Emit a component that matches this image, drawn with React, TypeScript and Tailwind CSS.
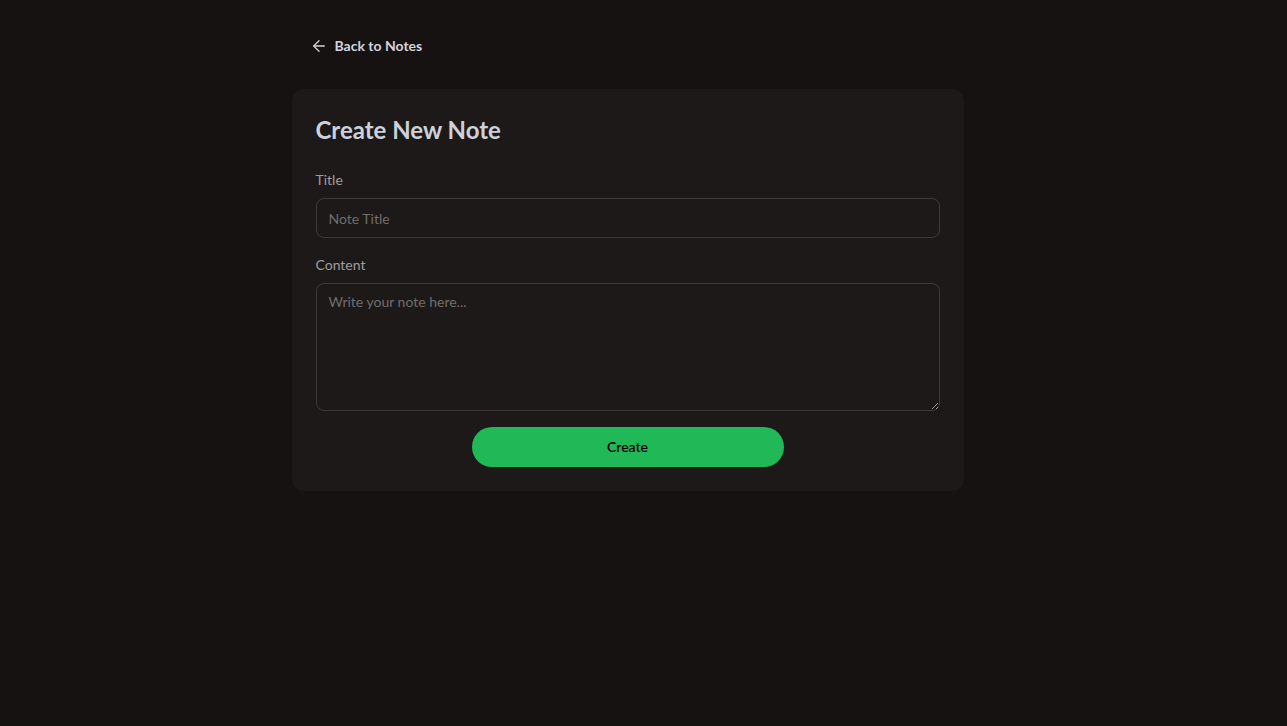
import { ArrowLeft } from "lucide-react";

export default function App() {
  return (
    <div
      className="min-h-screen w-full bg-[#151211] pr-8"
      style={{ fontFamily: 'Lato, "Noto Sans", sans-serif' }}
    >
      <div className="mx-auto w-[672px] pt-9">
        {/* Back link */}
        <a href="#" className="ml-[18px] flex h-5 items-center gap-[7px] text-sm font-bold text-[#d4d4dc]">
          <ArrowLeft className="h-[18px] w-[18px]" strokeWidth={1.75} />
          <span>Back to Notes</span>
        </a>

        {/* Form card */}
        <div className="mt-[33px] rounded-xl bg-[#1c1918] p-6">
          <h1 className="mb-6 mt-[1px] text-2xl font-bold leading-8 text-[#cdd1da]">Create New Note</h1>

          <div className="mb-[17px]">
            <label className="mb-2 block text-sm leading-5 text-[#a09c9c]">Title</label>
            <input
              type="text"
              placeholder="Note Title"
              className="h-10 w-full rounded-lg border border-[#3d3939] bg-transparent px-3 text-sm text-[#d4d4d4] outline-none placeholder:text-[#726d6d]"
            />
          </div>

          <div className="mb-4">
            <label className="mb-2 block text-sm leading-5 text-[#a09c9c]">Content</label>
            <textarea
              placeholder="Write your note here..."
              className="block h-32 w-full rounded-lg border border-[#3d3939] bg-transparent px-3 py-2 text-sm leading-5 text-[#d4d4d4] outline-none placeholder:text-[#726d6d]"
            />
          </div>

          <div className="flex justify-center">
            <button className="h-10 w-[312px] rounded-full bg-[#21b858] text-sm font-semibold text-black">
              Create
            </button>
          </div>
        </div>
      </div>
    </div>
  );
}
